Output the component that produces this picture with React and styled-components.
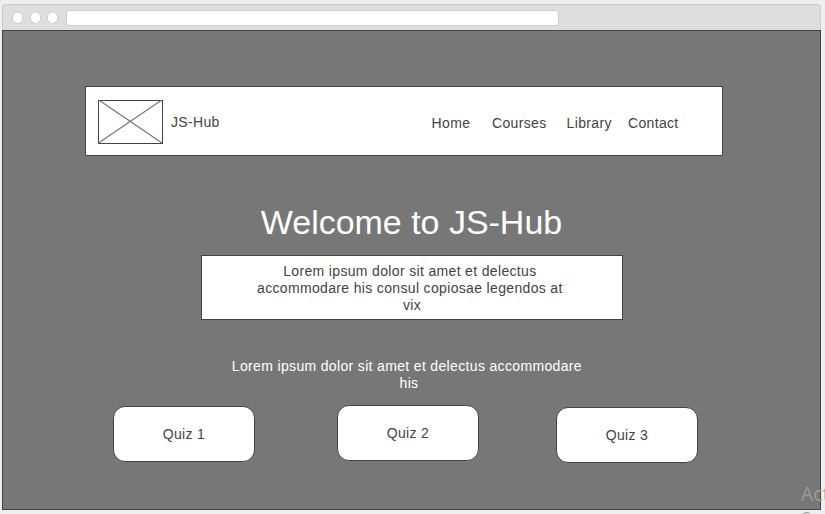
import React from 'react';
import styled, { createGlobalStyle } from 'styled-components';

const INK = '#434343';

const GlobalStyle = createGlobalStyle`
  * { box-sizing: border-box; }
  html, body { margin: 0; padding: 0; }
  body {
    width: 825px;
    height: 514px;
    overflow: hidden;
    background: #eeeeee;
    font-family: 'Liberation Sans', Arial, sans-serif;
    font-size: 14px;
    line-height: 17px;
    letter-spacing: 0.34px;
    color: ${INK};
  }
`;

const Screen = styled.div`
  position: relative;
  width: 825px;
  height: 514px;
  padding: 4px 4px 4px 2px;
  overflow: hidden;
`;

const Chrome = styled.div`
  display: flex;
  align-items: flex-start;
  height: 26px;
  padding: 5px 0 0 9px;
  background: #dedede;
  border: 1px solid #cccccc;
  border-bottom: 0;
  border-radius: 4px 4px 0 0;
`;

const Browser = styled.div`
  width: 819px;
`;

const Dots = styled.svg`
  display: block;
  width: 51px;
  height: 14px;
  margin-top: 1px;
`;

const AddressBar = styled.div`
  width: 493px;
  height: 16px;
  margin-left: 3px;
  background: #fff;
  border: 1px solid #cccccc;
  border-radius: 3px;
`;

const Page = styled.main`
  display: flex;
  flex-direction: column;
  height: 480px;
  padding: 55px 0 0 82px;
  background: #777777;
  border: 1px solid ${INK};
`;

const NavBar = styled.header`
  display: flex;
  width: 638px;
  height: 70px;
  padding: 13px 0 0 12px;
  background: #fff;
  border: 1px solid ${INK};
`;

const Logo = styled.svg`
  display: block;
  flex: none;
  width: 65px;
  height: 44px;
`;

const Brand = styled.div`
  flex: none;
  width: 268.6px;
  padding: 14px 0 0 8px;
`;

const NavLinks = styled.nav`
  display: flex;
  padding-top: 15px;
`;

const NavLink = styled.span`
  flex: none;
  width: ${(p) => p.$width}px;
  white-space: nowrap;
`;

const Title = styled.h1`
  width: 653px;
  margin: 46px 0 0;
  font-size: 34px;
  font-weight: 400;
  line-height: 40px;
  letter-spacing: -0.02px;
  text-align: center;
  color: #fff;
`;

const Intro = styled.p`
  width: 422px;
  height: 65px;
  margin: 13px 0 0 116px;
  padding: 7px 50px 0;
  background: #fff;
  border: 1px solid ${INK};
  text-align: center;
  white-space: break-spaces;
`;

const Caption = styled.p`
  width: 370px;
  margin: 38px 0 0 139px;
  text-align: center;
  white-space: break-spaces;
  color: #fff;
`;

const QuizRow = styled.div`
  display: flex;
  margin: 13px 0 0 28px;
`;

const QuizButton = styled.button`
  width: 142px;
  height: 56px;
  margin: ${(p) => p.$top}px 0 0 ${(p) => p.$gap}px;
  padding: 0;
  background: #fff;
  border: 1px solid ${INK};
  border-radius: 12px;
  font: inherit;
  letter-spacing: inherit;
  color: inherit;
`;

const Watermark = styled.div`
  position: absolute;
  left: 801px;
  top: 480px;
  font-family: 'Open Sans', 'Noto Sans', sans-serif;
  font-size: 19.5px;
  line-height: 27px;
  letter-spacing: 0;
  white-space: nowrap;
  color: #9b9b9b;
`;

const WatermarkNote = styled.div`
  font-size: 14px;
  line-height: 20px;
`;

const links = [
  { label: 'Home', width: 60.4 },
  { label: 'Courses', width: 74.6 },
  { label: 'Library', width: 61.4 },
  { label: 'Contact', width: 60 },
];

const quizzes = [
  { label: 'Quiz 1', top: 1, gap: 0 },
  { label: 'Quiz 2', top: 0, gap: 82 },
  { label: 'Quiz 3', top: 2, gap: 77 },
];

export default function App() {
  return (
    <Screen>
      <GlobalStyle />
      <Browser>
        <Chrome>
          <Dots viewBox="0 0 51 14" fill="#fff" stroke="#cccccc">
            <rect x="0.5" y="1" width="10" height="11.5" rx="5" />
            <rect x="18.5" y="1" width="10" height="11.5" rx="5" />
            <rect x="35.5" y="1" width="10" height="11.5" rx="5" />
          </Dots>
          <AddressBar />
        </Chrome>
        <Page>
          <NavBar>
            <Logo viewBox="0 0 65 44" fill="none" stroke={INK}>
              <rect x="0.5" y="0.5" width="64" height="43" />
              <path d="M1.5 0.5 64 43M63 0.5 0.5 43" stroke="#777777" strokeWidth="1.2" />
            </Logo>
            <Brand>JS-Hub</Brand>
            <NavLinks>
              {links.map((l) => (
                <NavLink key={l.label} $width={l.width}>{l.label}</NavLink>
              ))}
            </NavLinks>
          </NavBar>
          <Title>Welcome to JS-Hub</Title>
          <Intro>
            Lorem ipsum dolor sit amet et delectus accommodare his consul copiosae legendos at vix
          </Intro>
          <Caption>Lorem ipsum dolor sit amet et delectus accommodare his</Caption>
          <QuizRow>
            {quizzes.map((q) => (
              <QuizButton key={q.label} $top={q.top} $gap={q.gap}>{q.label}</QuizButton>
            ))}
          </QuizRow>
        </Page>
      </Browser>
      <Watermark>
        Act
        <WatermarkNote>Go</WatermarkNote>
      </Watermark>
    </Screen>
  );
}
